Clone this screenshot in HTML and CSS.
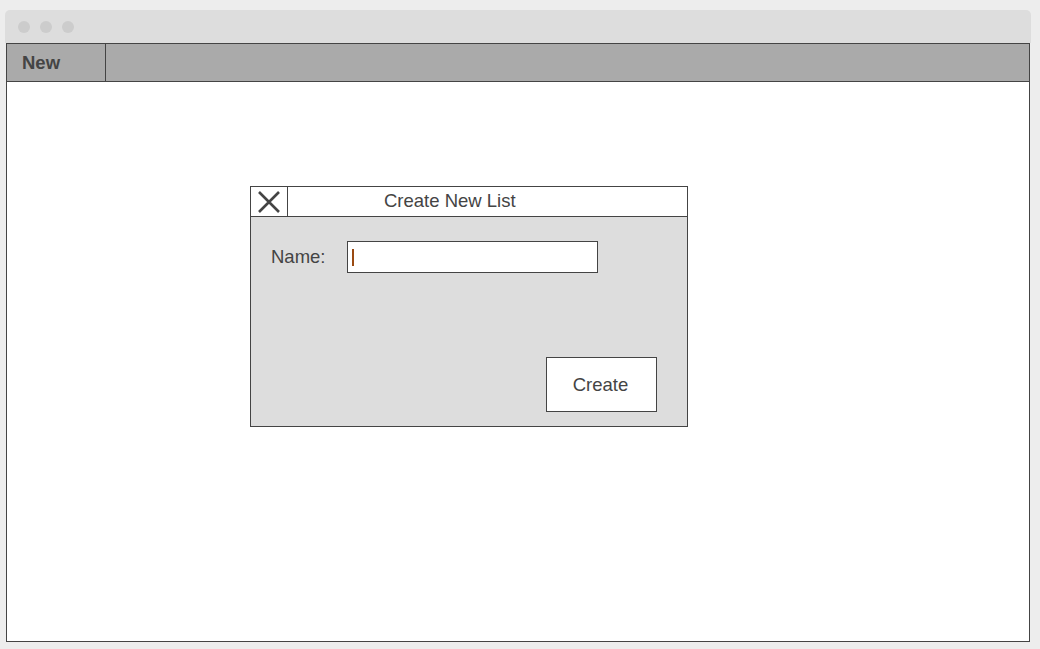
FILE: index.html
```html
<!DOCTYPE html>
<html>
<head>
<meta charset="utf-8">
<link rel="stylesheet" href="styles.css">
</head>
<body>
<div class="window">
  <div class="titlebar">
    <span class="dot"></span><span class="dot"></span><span class="dot"></span>
  </div>
  <div class="frame">
    <div class="toolbar">
      <div class="tool-cell">New</div>
    </div>
    <div class="content">
      <div class="dialog">
        <div class="dialog-head">
          <div class="close">
            <svg width="24" height="24" viewBox="0 0 24 24"><path d="M2 2 L22 22 M22 2 L2 22" stroke="#444" stroke-width="2.6" fill="none"/></svg>
          </div>
          <div class="dialog-title">Create New List</div>
        </div>
        <div class="dialog-body">
          <div class="field-row">
            <span class="label">Name:</span>
            <div class="input"><span class="caret"></span></div>
          </div>
          <div class="actions">
            <div class="btn">Create</div>
          </div>
        </div>
      </div>
    </div>
  </div>
</div>
</body>
</html>
```
FILE: styles.css
```css
html, body {
  margin: 0;
  padding: 0;
  background: #ededed;
  font-family: "Liberation Sans", Arial, sans-serif;
  color: #444;
}
.window {
  margin: 10px 0 0 5px;
  width: 1026px;
}
.titlebar {
  height: 33px;
  background: #dddddd;
  border-radius: 5px 5px 0 0;
  display: flex;
  align-items: center;
  padding-left: 13px;
  gap: 10px;
  box-sizing: border-box;
}
.dot {
  width: 12px;
  height: 12px;
  border-radius: 50%;
  background: #cccccc;
}
.frame {
  margin: 0 1px;
  border: 1px solid #444;
  height: 599px;
  box-sizing: border-box;
  display: flex;
  flex-direction: column;
  background: #fff;
}
.toolbar {
  height: 38px;
  box-sizing: border-box;
  border-bottom: 1px solid #444;
  background: #aaaaaa;
  display: flex;
}
.tool-cell {
  width: 99px;
  box-sizing: border-box;
  border-right: 1px solid #444;
  padding-left: 15px;
  font-weight: bold;
  font-size: 18.5px;
  line-height: 37px;
  color: #444;
}
.content {
  flex: 1;
  background: #fff;
  padding: 104px 0 0 243px;
}
.dialog {
  width: 438px;
  height: 241px;
  box-sizing: border-box;
  border: 1px solid #444;
  background: #dddddd;
  display: flex;
  flex-direction: column;
}
.dialog-head {
  height: 30px;
  box-sizing: border-box;
  border-bottom: 1px solid #444;
  background: #fff;
  display: flex;
}
.close {
  width: 37px;
  box-sizing: border-box;
  border-right: 1px solid #444;
  display: flex;
  align-items: center;
  justify-content: center;
}
.close svg {
  display: block;
}
.dialog-title {
  padding-left: 96px;
  font-size: 18.5px;
  line-height: 28px;
  color: #444;
}
.dialog-body {
  flex: 1;
  display: flex;
  flex-direction: column;
  justify-content: space-between;
  padding: 24px 30px 14px 20px;
}
.field-row {
  display: flex;
  align-items: center;
}
.label {
  width: 76px;
  font-size: 18.5px;
  color: #444;
}
.input {
  width: 251px;
  height: 32px;
  box-sizing: border-box;
  border: 1px solid #444;
  background: #fff;
  display: flex;
  align-items: center;
  padding-left: 4px;
}
.caret {
  width: 2px;
  height: 17px;
  background: #9a4a12;
}
.actions {
  display: flex;
  justify-content: flex-end;
}
.btn {
  width: 111px;
  height: 55px;
  box-sizing: border-box;
  border: 1px solid #444;
  background: #fff;
  font-size: 18.5px;
  color: #444;
  display: flex;
  align-items: center;
  justify-content: center;
  padding-right: 2px;
}
```
